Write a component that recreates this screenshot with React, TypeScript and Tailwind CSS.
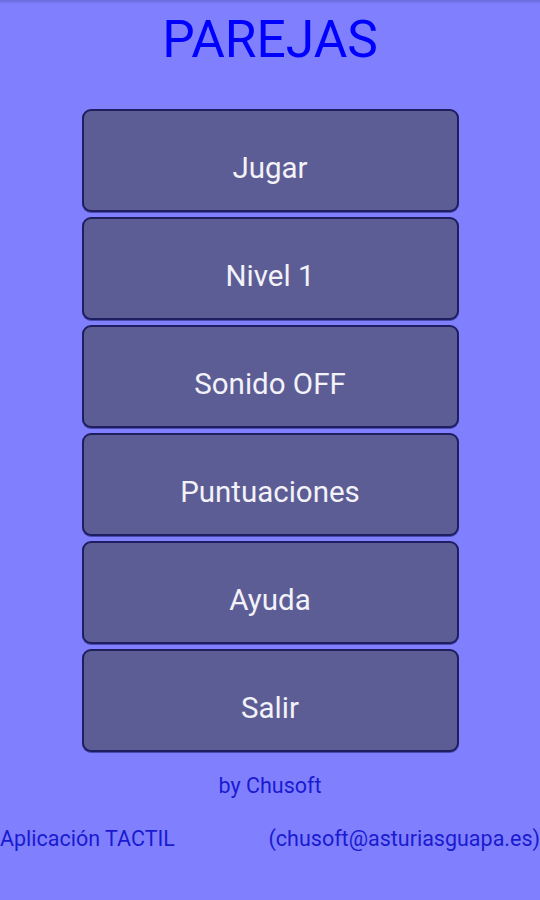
const buttons = ["Jugar", "Nivel 1", "Sonido OFF", "Puntuaciones", "Ayuda", "Salir"];

export default function App() {
  return (
    <div
      className="w-[540px] h-[900px] bg-[#8080ff] flex flex-col items-center relative"
      style={{ fontFamily: "Roboto, 'Noto Sans', sans-serif" }}
    >
      {/* barra superior */}
      <div className="absolute top-0 left-0 w-full h-[4px] bg-gradient-to-b from-[#6a6ad8] to-[#8080ff]" />

      <h1 className="pt-[9px] text-[51.5px] leading-[62px] text-[#0000ff] font-normal">
        PAREJAS
      </h1>

      <div className="mt-[38px] flex flex-col gap-[5px] w-[377px]">
        {buttons.map((label) => (
          <button
            key={label}
            type="button"
            className="h-[103px] w-full rounded-[9px] border-2 border-[#1e1e60] bg-[#5d5d95] text-[#f2f2f8] text-[29.5px] pt-[16px] flex items-center justify-center shadow-[0_1px_0_#4a4ab0]"
          >
            {label}
          </button>
        ))}
      </div>

      <div className="mt-[20px] text-[21.5px] leading-[28px] text-[#1a1ad0]">by Chusoft</div>

      <div className="mt-[25px] w-full flex justify-between text-[21.5px] leading-[28px] text-[#1a1ad0]">
        <span>Aplicación TACTIL</span>
        <span>(chusoft@asturiasguapa.es)</span>
      </div>
    </div>
  );
}
